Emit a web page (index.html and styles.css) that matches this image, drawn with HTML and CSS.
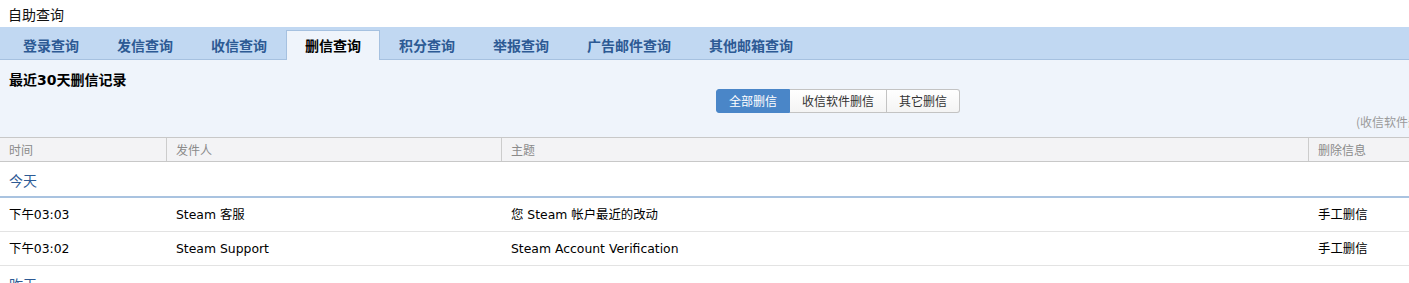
FILE: index.html
```html
<!DOCTYPE html>
<html lang="zh-CN">
<head>
<meta charset="utf-8">
<title>自助查询</title>
<link rel="stylesheet" href="styles.css">
</head>
<body>
<div class="page">
  <div class="title">自助查询</div>
  <div class="tabs">
    <div class="tab">登录查询</div>
    <div class="tab">发信查询</div>
    <div class="tab">收信查询</div>
    <div class="tab active">删信查询</div>
    <div class="tab">积分查询</div>
    <div class="tab">举报查询</div>
    <div class="tab">广告邮件查询</div>
    <div class="tab">其他邮箱查询</div>
  </div>
  <div class="panel">
    <div class="heading">最近30天删信记录</div>
    <div class="btn-group">
      <div class="btn active">全部删信</div>
      <div class="btn">收信软件删信</div>
      <div class="btn">其它删信</div>
    </div>
    <div class="note">(收信软件删信：指通过收信软件删除的邮件)</div>
  </div>
  <div class="grid head">
    <div class="cell">时间</div>
    <div class="cell">发件人</div>
    <div class="cell">主题</div>
    <div class="cell">删除信息</div>
  </div>
  <div class="day">今天</div>
  <div class="grid row">
    <div class="cell">下午03:03</div>
    <div class="cell">Steam 客服</div>
    <div class="cell">您 Steam 帐户最近的改动</div>
    <div class="cell">手工删信</div>
  </div>
  <div class="grid row">
    <div class="cell">下午03:02</div>
    <div class="cell">Steam Support</div>
    <div class="cell">Steam Account Verification</div>
    <div class="cell">手工删信</div>
  </div>
  <div class="day">昨天</div>
</div>
</body>
</html>
```
FILE: styles.css
```css
html, body {
  margin: 0;
  padding: 0;
  background: #fff;
}
body {
  font-family: "DejaVu Sans", "Noto Sans CJK SC", sans-serif;
  font-size: 12.4px;
  color: #000;
  overflow: hidden;
}
.page {
  width: 1409px;
  overflow: hidden;
}
.title {
  height: 27px;
  line-height: 28px;
  padding-left: 8px;
  font-family: "Noto Sans CJK SC", sans-serif;
  font-size: 14px;
  color: #111;
}
.tabs {
  display: flex;
  align-items: flex-end;
  height: 32px;
  padding-left: 4px;
  background: #c1d8f2;
  border-bottom: 1px solid #a6c1e0;
}
.tab {
  height: 28px;
  line-height: 28px;
  padding: 0 18px;
  border: 1px solid transparent;
  border-bottom: none;
  font-family: "Noto Sans CJK SC", sans-serif;
  font-size: 14px;
  font-weight: bold;
  color: #2d5a94;
  white-space: nowrap;
}
.tab.active {
  height: 29px;
  margin-bottom: -1px;
  background: #eff4fb;
  border-color: #a6c1e0;
  color: #000;
}
.panel {
  height: 77px;
  box-sizing: border-box;
  padding-top: 12px;
  background: #eff4fb;
}
.heading {
  height: 16px;
  line-height: 16px;
  padding-left: 9px;
  font-family: "DejaVu Sans", "Noto Sans CJK SC", sans-serif;
  font-size: 14px;
  font-weight: bold;
}
.btn-group {
  display: flex;
  margin-top: 1px;
  margin-left: 716px;
}
.btn {
  height: 22px;
  line-height: 22px;
  padding: 0 12px;
  border: 1px solid #c3c3c3;
  border-left: none;
  background: linear-gradient(#ffffff, #f4f4f4);
  font-family: "Noto Sans CJK SC", sans-serif;
  font-size: 12px;
  color: #333;
  white-space: nowrap;
}
.btn:first-child {
  border-left: 1px solid #c3c3c3;
  border-radius: 3px 0 0 3px;
}
.btn:last-child {
  border-radius: 0 3px 3px 0;
}
.btn.active {
  background: #4a86c8;
  border-color: #4a86c8;
  color: #fff;
}
.note {
  margin-top: 1px;
  height: 16px;
  line-height: 16px;
  padding-left: 1356px;
  white-space: nowrap;
  font-family: "Noto Sans CJK SC", sans-serif;
  font-size: 12px;
  color: #9a9a9a;
}
.grid {
  display: grid;
  grid-template-columns: 166px 335px 807px 1fr;
}
.head {
  height: 23px;
  background: #f3f3f5;
  border-top: 1px solid #c8c8c8;
  border-bottom: 1px solid #c8c8c8;
}
.head .cell {
  line-height: 23px;
  padding-left: 9px;
  font-family: "Noto Sans CJK SC", sans-serif;
  font-size: 12px;
  color: #8a8a8a;
}
.head .cell + .cell {
  border-left: 1px solid #cccccc;
}
.day {
  height: 34px;
  line-height: 36px;
  padding-left: 9px;
  border-bottom: 2px solid #a9c3e0;
  font-family: "Noto Sans CJK SC", sans-serif;
  font-size: 14px;
  color: #2d5a94;
}
.row {
  height: 33px;
  border-bottom: 1px solid #e3e3e3;
}
.row .cell {
  line-height: 34px;
  padding-left: 9px;
  white-space: nowrap;
}
.row .cell + .cell {
  padding-left: 10px;
}
```
